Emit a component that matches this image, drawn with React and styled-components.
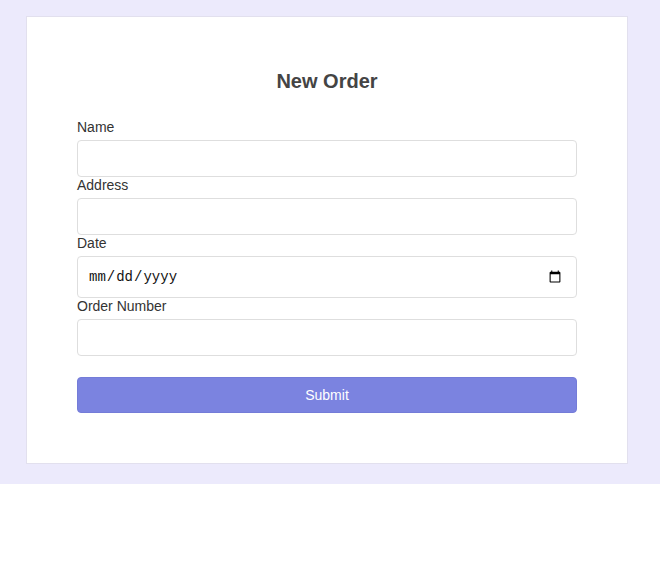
import React from 'react'
import styled, { createGlobalStyle } from 'styled-components'

const GlobalStyle = createGlobalStyle`
  body {
    margin: 0;
    background: #ffffff;
    font-family: "Liberation Sans", Arial, sans-serif;
  }
`

const Page = styled.div`
  background: #eceafc;
  padding: 16px 32px 20px 26px;
`

const Card = styled.div`
  box-sizing: border-box;
  width: 602px;
  background: #ffffff;
  border: 1px solid #e2e0ee;
  padding: 53px 50px 50px;
`

const Title = styled.h2`
  margin: 0 0 26px;
  font-size: 20px;
  line-height: 23px;
  font-weight: 700;
  color: #444444;
  text-align: center;
`

const Form = styled.form`
  display: flex;
  flex-direction: column;
`

const Label = styled.label`
  display: block;
  font-size: 14px;
  line-height: 16px;
  color: #333333;
  margin-bottom: 5px;
`

const Input = styled.input`
  box-sizing: border-box;
  width: 100%;
  height: ${(p) => (p.type === 'date' ? '42px' : '37px')};
  margin: 0;
  padding: 0 10px;
  border: 1px solid #dedede;
  border-radius: 4px;
  background: #ffffff;
  font-family: ${(p) =>
    p.type === 'date' ? '"Liberation Mono", "Courier New", monospace' : '"Liberation Sans", Arial, sans-serif'};
  font-size: 14px;
  color: #111111;
  outline: none;

  &::-webkit-calendar-picker-indicator {
    margin-right: 2px;
  }
`

const SubmitButton = styled.button`
  box-sizing: border-box;
  width: 100%;
  height: 36px;
  margin-top: 21px;
  border: 1px solid #747cd8;
  border-radius: 4px;
  background: #7b83e0;
  color: #ffffff;
  font-family: "Liberation Sans", Arial, sans-serif;
  font-size: 14px;
  cursor: pointer;
`

const fields = [
  { id: 'name', label: 'Name', type: 'text' },
  { id: 'address', label: 'Address', type: 'text' },
  { id: 'date', label: 'Date', type: 'date' },
  { id: 'order', label: 'Order Number', type: 'text' },
]

export default function App() {
  return (
    <>
      <GlobalStyle />
      <Page>
        <Card>
          <Title>New Order</Title>
          <Form onSubmit={(e) => e.preventDefault()}>
            {fields.map((f) => (
              <div key={f.id}>
                <Label htmlFor={f.id}>{f.label}</Label>
                <Input id={f.id} type={f.type} />
              </div>
            ))}
            <SubmitButton type="submit">Submit</SubmitButton>
          </Form>
        </Card>
      </Page>
    </>
  )
}
